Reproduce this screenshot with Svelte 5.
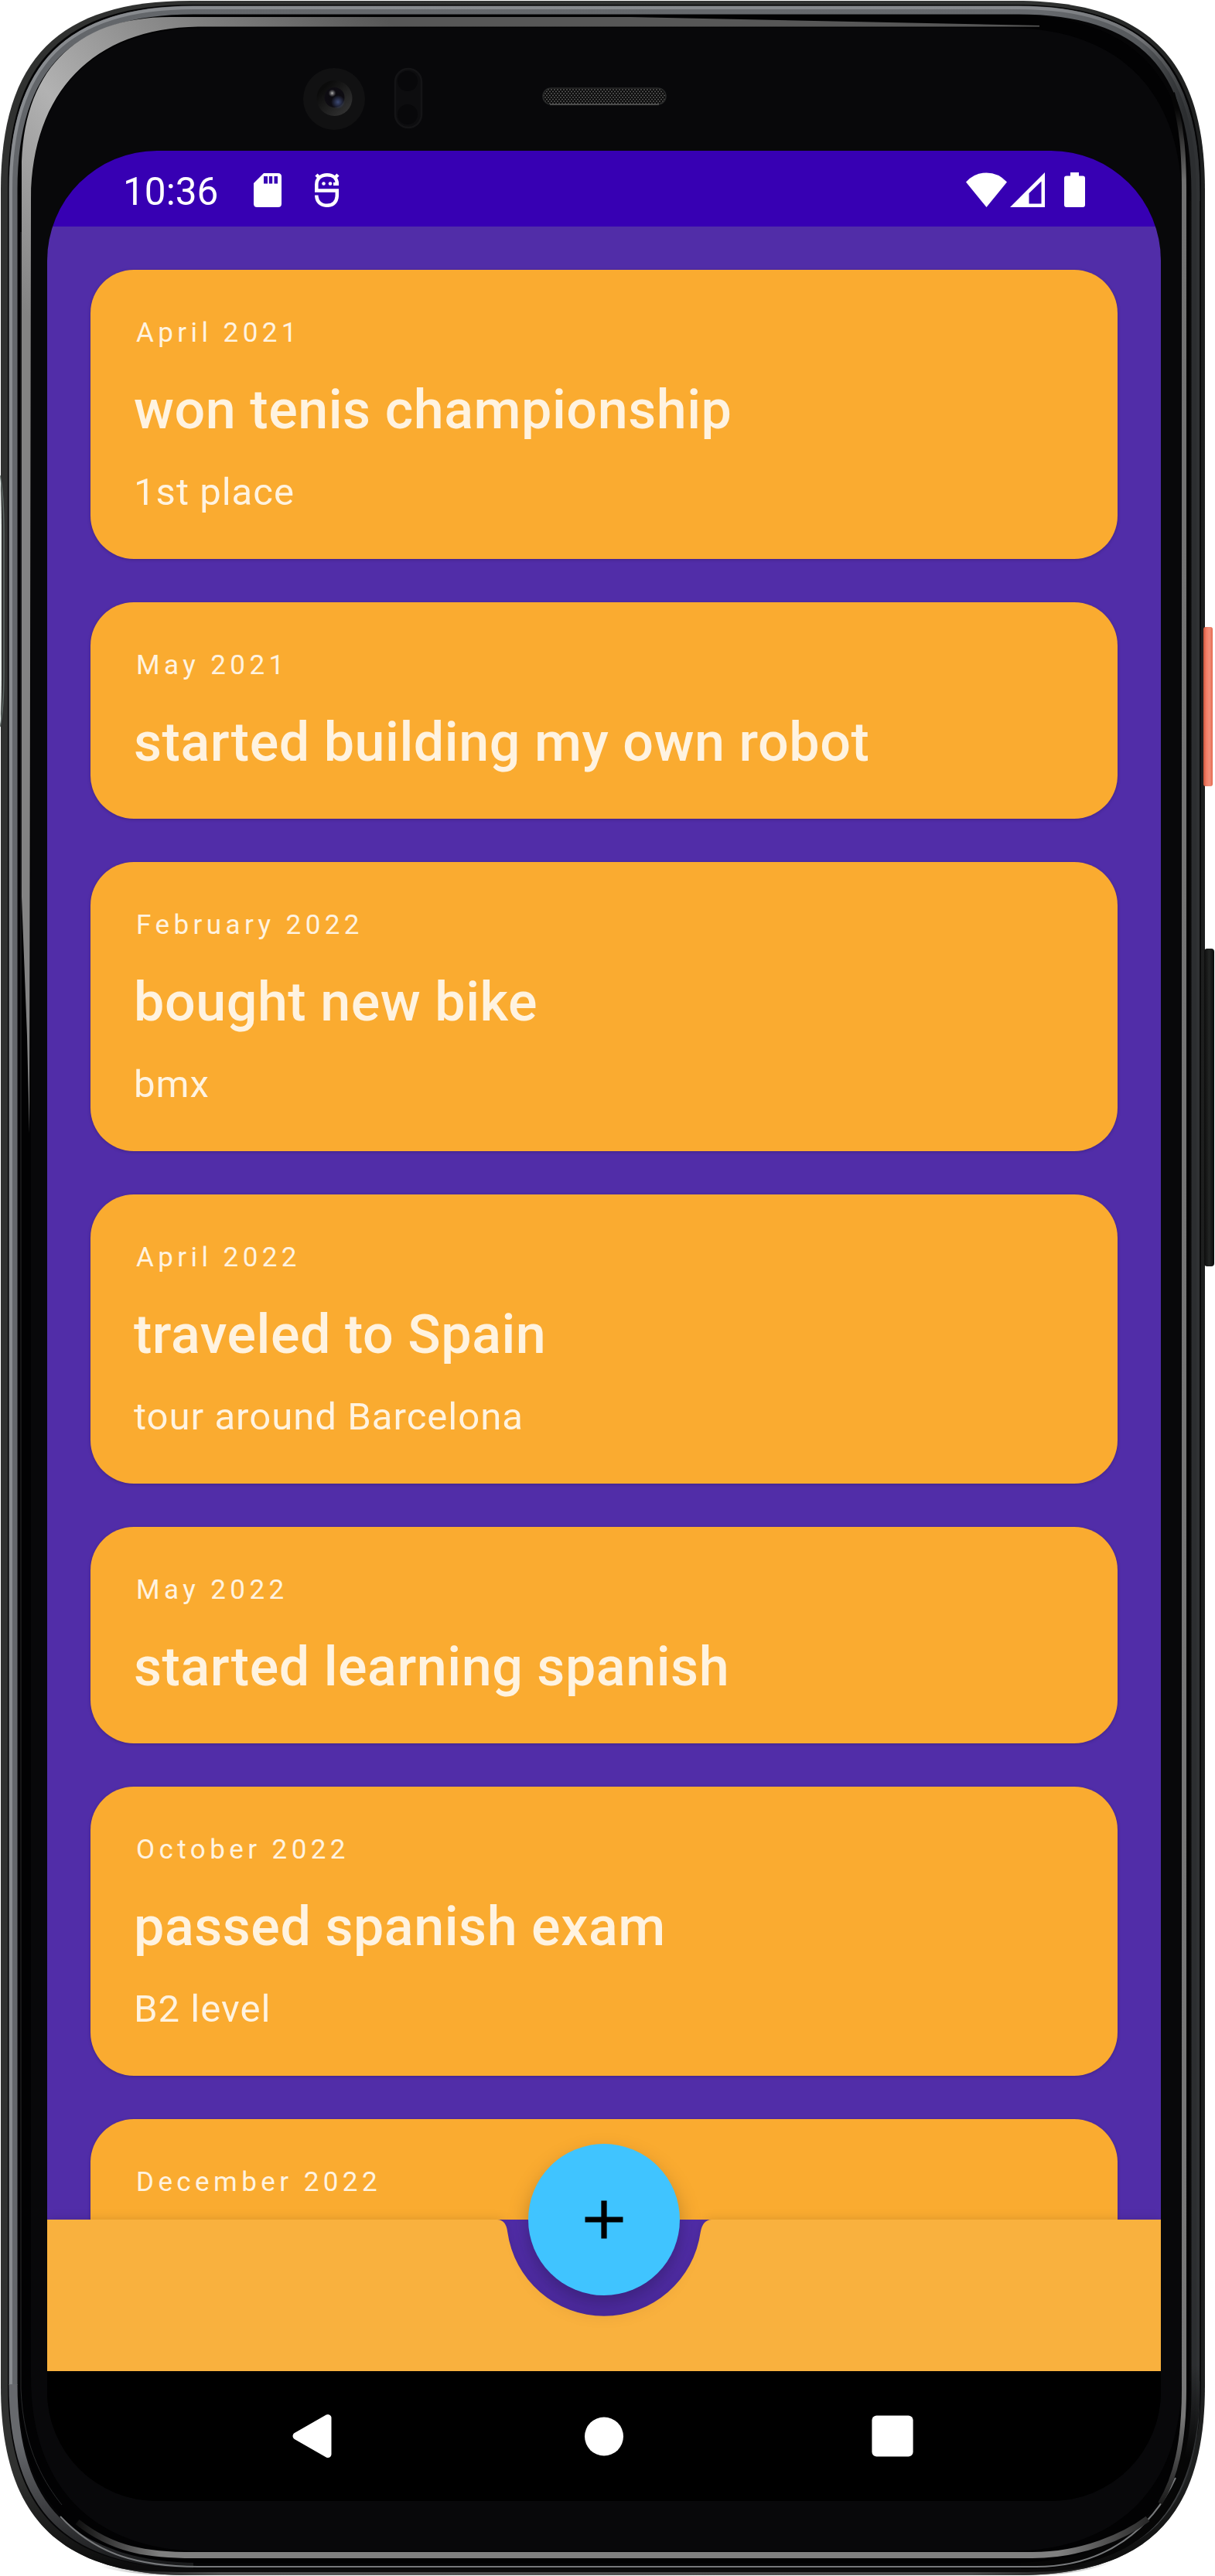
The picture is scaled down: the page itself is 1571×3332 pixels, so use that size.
<script>
  const events = [
    { date: 'April 2021', title: 'won tenis championship', note: '1st place' },
    { date: 'May 2021', title: 'started building my own robot' },
    { date: 'February 2022', title: 'bought new bike', note: 'bmx' },
    { date: 'April 2022', title: 'traveled to Spain', note: 'tour around Barcelona' },
    { date: 'May 2022', title: 'started learning spanish' },
    { date: 'October 2022', title: 'passed spanish exam', note: 'B2 level' },
    { date: 'December 2022', title: '' }
  ];

  // Closed outline with continuous corners: r is the corner reach, k the handle distance.
  function outline(x0, y0, x1, y1, r, k) {
    return `M${x0} ${y0 + r}C${x0} ${y0 + k} ${x0 + k} ${y0} ${x0 + r} ${y0}H${x1 - r}` +
      `C${x1 - k} ${y0} ${x1} ${y0 + k} ${x1} ${y0 + r}V${y1 - r}` +
      `C${x1} ${y1 - k} ${x1 - k} ${y1} ${x1 - r} ${y1}H${x0 + r}` +
      `C${x0 + k} ${y1} ${x0} ${y1 - k} ${x0} ${y1 - r}Z`;
  }

  // Left side, top and right side of the metal rim, d px inside its outer edge.
  function rim(d) {
    const l = 11 + d, t = 7 + d, r = 1552 - d;
    return `M${l} 3085V245C${l} ${t + 73} ${l + 73} ${t} 250 ${t}H1317` +
      `C${r - 70} ${t} ${r} ${t + 73} ${r} 250V3095C${r} 3245 1478 ${3322 - d} 1320 ${3322 - d}`;
  }
  const rimLowerLeft = (d) =>
    `M${11 + d} 3084C${11 + d} 3245 ${84 + d} ${3322 - d} 250 ${3322 - d}`;
</script>

<div class="phone">
  <svg class="chassis" viewBox="0 0 1571 3332" aria-hidden="true">
    <defs>
      <linearGradient id="edge" x1="0" x2="1571" y1="0" y2="0" gradientUnits="userSpaceOnUse">
        <stop offset="0" stop-color="#303130" />
        <stop offset=".85" stop-color="#323433" />
        <stop offset="1" stop-color="#1c1d1d" />
      </linearGradient>
      <linearGradient id="bottomShade" x1="0" x2="0" y1="3200" y2="3320" gradientUnits="userSpaceOnUse">
        <stop offset="0" stop-color="#0c0c0c" stop-opacity="0" />
        <stop offset="1" stop-color="#0c0c0c" />
      </linearGradient>
      <linearGradient id="metal" x1="0" x2="1571" y1="0" y2="0" gradientUnits="userSpaceOnUse">
        <stop offset="0" stop-color="#63666a" />
        <stop offset=".86" stop-color="#66696d" />
        <stop offset=".94" stop-color="#54575a" />
        <stop offset=".975" stop-color="#2c2e30" />
      </linearGradient>
      <linearGradient id="metalLight" x1="0" x2="1571" y1="0" y2="0" gradientUnits="userSpaceOnUse">
        <stop offset="0" stop-color="#888b8f" />
        <stop offset=".86" stop-color="#85888c" />
        <stop offset=".94" stop-color="#707275" />
        <stop offset=".98" stop-color="#303234" />
      </linearGradient>
      <linearGradient id="metalFade" x1="0" x2="0" y1="3160" y2="3318" gradientUnits="userSpaceOnUse">
        <stop offset="0" stop-color="#67696d" />
        <stop offset="1" stop-color="#191a1b" />
      </linearGradient>
      <linearGradient id="rightFade" x1="0" x2="0" y1="3060" y2="3180" gradientUnits="userSpaceOnUse">
        <stop offset="0" stop-color="#060606" stop-opacity="0" />
        <stop offset="1" stop-color="#060606" />
      </linearGradient>
      <linearGradient id="gloss" x1="28" x2="480" y1="400" y2="0" gradientUnits="userSpaceOnUse">
        <stop offset="0" stop-color="#838383" />
        <stop offset=".35" stop-color="#b2b2b2" />
        <stop offset=".6" stop-color="#8c8c8c" />
        <stop offset="1" stop-color="#575757" />
      </linearGradient>
      <linearGradient id="bottomEdge" x1="130" x2="1440" y1="0" y2="0" gradientUnits="userSpaceOnUse">
        <stop offset="0" stop-color="#555" stop-opacity="0" />
        <stop offset=".12" stop-color="#555" />
        <stop offset=".86" stop-color="#4c4c4c" />
        <stop offset="1" stop-color="#444" stop-opacity="0" />
      </linearGradient>
      <linearGradient id="rightGloss" x1="0" x2="0" y1="140" y2="3250" gradientUnits="userSpaceOnUse">
        <stop offset="0" stop-color="#050505" />
        <stop offset=".03" stop-color="#707070" />
        <stop offset=".96" stop-color="#777" />
        <stop offset="1" stop-color="#111" />
      </linearGradient>
      <linearGradient id="lowGloss" x1="95" x2="1510" y1="0" y2="0" gradientUnits="userSpaceOnUse">
        <stop offset="0" stop-color="#0a0a0a" />
        <stop offset=".08" stop-color="#808080" />
        <stop offset=".9" stop-color="#808080" />
        <stop offset="1" stop-color="#161616" />
      </linearGradient>
      <linearGradient id="power" x1="0" x2="1" y1="0" y2="0">
        <stop offset="0" stop-color="#c9543c" />
        <stop offset=".3" stop-color="#f07c64" />
        <stop offset=".65" stop-color="#f38f7a" />
        <stop offset="1" stop-color="#e4684e" />
      </linearGradient>
      <linearGradient id="volume" x1="0" x2="1" y1="0" y2="0">
        <stop offset="0" stop-color="#0d0d0d" />
        <stop offset=".5" stop-color="#222423" />
        <stop offset="1" stop-color="#0b0b0b" />
      </linearGradient>
      <radialGradient id="lens">
        <stop offset="0" stop-color="#0a090e" />
        <stop offset="1" stop-color="#0e0c12" />
      </radialGradient>
      <linearGradient id="lensRing" x1="0" x2="1" y1="0" y2="1">
        <stop offset=".2" stop-color="#0b0b0b" />
        <stop offset="1" stop-color="#393939" />
      </linearGradient>
      <radialGradient id="blueGlow">
        <stop offset="0" stop-color="#3d4a74" />
        <stop offset="1" stop-color="#3d4a74" stop-opacity="0" />
      </radialGradient>
      <radialGradient id="whiteGlow">
        <stop offset="0" stop-color="#b0b0b0" />
        <stop offset="1" stop-color="#777" stop-opacity="0" />
      </radialGradient>
      <pattern id="mesh" width="4" height="5" patternUnits="userSpaceOnUse">
        <rect width="4" height="5" fill="#0c0c0c" />
        <path d="M0 1h2M2 3.5h2" stroke="#555" stroke-width="1.3" />
      </pattern>
    </defs>

    <path d={outline(1, 1, 1558, 3331, 245, 75)} fill="url(#edge)" />
    <path d={outline(1, 1, 1558, 3331, 245, 75)} fill="url(#bottomShade)" />
    <path d="M130 3318C165 3328 200 3329 250 3329H1320C1370 3329 1400 3326 1440 3312" fill="none" stroke="url(#bottomEdge)" stroke-width="4" />
    <path d={outline(10, 6, 1553, 3322, 240, 73)} fill="#050506" />
    <rect x="1556" y="811" width="12" height="206" rx="3" fill="url(#power)" />
    <rect x="1557" y="1227" width="13" height="411" rx="4" fill="url(#volume)" />

    <g fill="none">
      <path d={rim(6)} stroke="url(#metal)" stroke-width="11" />
      <path d={rim(3)} stroke="url(#metalLight)" stroke-width="4" />
      <path d={rimLowerLeft(6)} stroke="url(#metalFade)" stroke-width="11" />
      <path d="M1546 3060C1546 3245 1480 3316 1320 3316" stroke="url(#rightFade)" stroke-width="14" />
    </g>

    <path d={outline(24, 19, 1538, 3315, 235, 76)} fill="#020203" />
    <path d={outline(40, 36, 1528, 3300, 225, 82)} fill="#08080a" />

    <path
      d="M28 220C28 95 95 22 220 22H815L1344 33V34.5H260C120 35 40 120 40 260L38 1466L35 1340L28 1160Z"
      fill="url(#gloss)"
    />
    <g fill="none">
      <path d="M78 3255C125 3305 180 3320 260 3320H1340C1430 3320 1490 3270 1520 3205" stroke="#77797b" stroke-width="2" />
      <path d="M1516 120C1529 165 1531 200 1531 250V3090C1531 3160 1520 3205 1500 3238" stroke="url(#rightGloss)" stroke-width="6" />
      <path d="M100 3262C145 3298 190 3305 250 3305H1335C1400 3305 1455 3280 1484 3258" stroke="url(#lowGloss)" stroke-width="8" />
      <path d="M27 300V3090C30 3170 60 3215 80 3240" stroke="#28292b" />
      <path d="M1539 260V3080M1552 260V3080" stroke="#0a0a0a" stroke-width="1.5" />
      <path d="M0 615Q5 640 5 690V870Q5 915 0 940" stroke="#5d6764" stroke-width="1.5" />
    </g>
    <path d="M0 613Q2 640 2 690V870Q2 915 0 940Z" fill="#e8eeeb" />

    <circle cx="432" cy="128" r="40" fill="#111112" />
    <circle cx="432.5" cy="127" r="23" fill="url(#lensRing)" />
    <circle cx="432.5" cy="126" r="13" fill="url(#lens)" />
    <circle cx="437" cy="132" r="9" fill="url(#blueGlow)" />
    <circle cx="429.500" cy="120.500" r="5" fill="url(#whiteGlow)" />
    <rect x="511" y="89" width="34" height="76" rx="17" fill="#0d0d0f" stroke="#141416" stroke-width="2.500" />
    <circle cx="527" cy="105" r="13" fill="#08080a" />
    <circle cx="527" cy="148" r="13" fill="#08080a" />
    <rect x="702" y="114" width="159" height="21" rx="10.500" fill="url(#mesh)" stroke="#282929" stroke-width="1.500" />
    <path d="M711 135.300H852" stroke="#555" stroke-width="1.500" />
  </svg>

  <div class="screen">
    <header class="status">
      <span class="clock">10:36</span>
      <svg class="sd" viewBox="0 0 36 44">
        <path d="M13 0H31.500Q36 0 36 4.500V39.500Q36 44 31.500 44H4.500Q0 44 0 39.500V13Z" fill="#fff" />
        <path d="M13 4h5v9.500h-5zM19.800 4h4.400v9.500h-4.400zM26.500 4h4.500v9.500h-4.500z" fill="#3700b3" />
      </svg>
      <svg class="debug" viewBox="0 0 32 44">
        <g fill="none" stroke="#fff" stroke-width="4.500">
          <path d="M2.300 22.500V14.500C2.300 7 8 2.300 16 2.300S28.800 7 28.800 13.800M0 22.500H28.800V28C28.800 37 24 41.800 16 41.800S2.300 37 2.300 28.500" />
          <path d="M2 2L6.500 6.500M30 2L25.500 6.500" />
          <path d="M24 14H31" stroke-width="4" />
        </g>
        <circle cx="11.500" cy="13.500" r="2.300" fill="#fff" />
        <circle cx="20" cy="13.500" r="2.300" fill="#fff" />
      </svg>
      <svg class="wifi" viewBox="0 0 53 45" fill="#fff">
        <path d="M0 12.500Q11 .4 26.500 .4T53 12.500L26.500 45Z" />
      </svg>
      <svg class="signal" viewBox="0 0 45 45">
        <path d="M45 0V45H0ZM40.500 11.500L24.500 27V40.500H40.500Z" fill="#fff" fill-rule="evenodd" />
      </svg>
      <svg class="battery" viewBox="0 0 27 45" fill="#fff">
        <path d="M8 0H19V4.500H24Q27 4.500 27 7.500V42Q27 45 24 45H3Q0 45 0 42V7.500Q0 4.500 3 4.500H8Z" />
      </svg>
    </header>

    <main class="app">
      <div class="list">
        {#each events as event}
          <article class="card">
            <p class="date">{event.date}</p>
            <h2 class="title">{event.title}</h2>
            {#if event.note}<p class="note">{event.note}</p>{/if}
          </article>
        {/each}
      </div>
      <div class="bar">
        <svg class="bar-shape" viewBox="0 0 1440 196">
          <path
            d="M0 0H582Q593.500 .5 595.200 16A126 126 0 0 0 844.800 16Q847.500 .5 859 0H1440V196H0Z"
            fill="#f9b13e"
          />
        </svg>
        <button class="fab" aria-label="Add">
          <svg viewBox="0 0 50 50"><path d="M25 .5V49.500M.5 25H49.500" stroke="#000" stroke-width="7.200" /></svg>
        </button>
      </div>
    </main>

    <nav class="keys">
      <svg viewBox="0 0 60 60">
        <path d="M9 30L50 6.500V53.500Z" fill="#fff" stroke="#fff" stroke-width="9" stroke-linejoin="round" />
      </svg>
      <svg viewBox="0 0 60 60"><circle cx="32" cy="30.500" r="25" fill="#fff" /></svg>
      <svg viewBox="0 0 60 60"><rect x="3.400" y="3.500" width="53.200" height="53" rx="6" fill="#fff" /></svg>
    </nav>
  </div>
</div>

<style>
  :global(body) {
    background: #fff;
  }
  .phone {
    display: grid;
    width: 1571px;
    height: 3332px;
    overflow: hidden;
    font-family: Roboto, 'Liberation Sans', sans-serif;
  }
  .chassis,
  .screen {
    grid-area: 1 / 1;
  }
  .chassis {
    width: 1571px;
    height: 3332px;
  }
  .screen {
    display: flex;
    flex-direction: column;
    width: 1440px;
    height: 3040px;
    margin: 195px 0 0 61px;
    border-radius: 142px;
    overflow: hidden;
    background: #000;
    z-index: 1;
  }
  .status {
    display: flex;
    align-items: center;
    box-sizing: border-box;
    height: 98px;
    padding: 4px 98px 0 98px;
    background: #3700b3;
    color: #fff;
  }
  .status svg {
    flex: none;
    height: 45px;
    margin-bottom: 1px;
  }
  .clock {
    width: 169px;
    padding-top: 3px;
    font-size: 49.500px;
    line-height: 58px;
  }
  .status .sd {
    width: 36px;
    height: 44px;
  }
  .status .debug {
    width: 32px;
    height: 44px;
    margin-left: 43px;
  }
  .wifi {
    width: 53px;
    margin-left: auto;
  }
  .signal {
    width: 45px;
    margin-left: 4px;
  }
  .battery {
    width: 27px;
    margin-left: 25px;
  }
  .app {
    display: flex;
    flex-direction: column;
    height: 2774px;
    background: #512da8;
  }
  .list {
    display: flex;
    flex-direction: column;
    gap: 56px;
    box-sizing: border-box;
    height: 2578px;
    padding: 56px 56px 0;
    overflow: hidden;
  }
  .card {
    flex: none;
    box-sizing: border-box;
    min-height: 280px;
    padding: 61px 56px 57px;
    border-radius: 56px;
    background: #faab30;
    box-shadow: 0 1px 4px rgba(0, 0, 0, 0.2);
    color: #fff3e0;
  }
  .card p,
  .card h2 {
    margin: 0;
  }
  .card .date {
    margin-left: 3px;
    font-size: 35px;
    line-height: 41px;
    letter-spacing: 5.420px;
  }
  .card .title {
    margin-top: 38px;
    font-size: 70px;
    font-weight: 500;
    line-height: 82px;
    letter-spacing: 0.560px;
  }
  .card .note {
    margin-top: 37px;
    font-size: 49px;
    line-height: 58px;
    letter-spacing: 1.030px;
  }
  .bar {
    display: flex;
    justify-content: center;
    position: relative;
    height: 196px;
  }
  .bar-shape {
    width: 1440px;
    height: 196px;
    overflow: visible;
    filter: drop-shadow(0 0 7px rgba(0, 0, 0, 0.13));
  }
  .fab {
    position: absolute;
    top: -98px;
    display: grid;
    place-items: center;
    width: 196px;
    height: 196px;
    padding: 0;
    border: 0;
    border-radius: 50%;
    background: #40c4ff;
    box-shadow: 0 14px 28px rgba(0, 0, 0, 0.26);
  }
  .fab svg {
    width: 50px;
    height: 50px;
  }
  .keys {
    display: flex;
    align-items: center;
    justify-content: space-between;
    box-sizing: border-box;
    height: 168px;
    padding: 0 317px 0 313px;
    background: #000;
  }
  .keys svg {
    width: 60px;
    height: 60px;
  }
</style>
